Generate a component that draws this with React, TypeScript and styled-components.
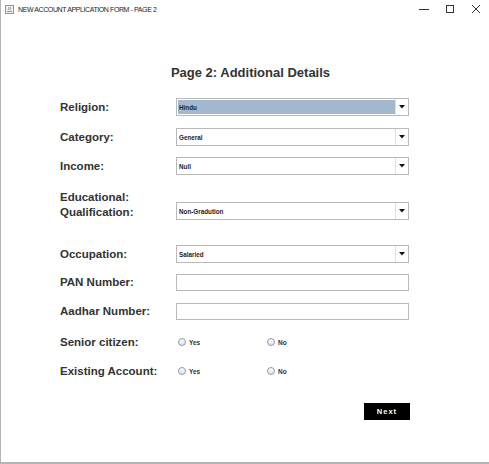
import React from "react";
import styled, { createGlobalStyle } from "styled-components";

const Global = createGlobalStyle`
  html, body { margin: 0; padding: 0; background: #ffffff; }
  body { font-family: "Liberation Sans", Arial, sans-serif; }
`;

const Frame = styled.div`
  width: 489px;
  height: 464px;
  box-sizing: border-box;
  border-left: 1px solid #b4b4b4;
  border-bottom: 2px solid #b4b4b4;
  background: #ffffff;
  display: flex;
  flex-direction: column;
  overflow: hidden;
`;

const TitleBar = styled.div`
  height: 18px;
  display: flex;
  align-items: center;
  padding-left: 4px;
  gap: 4px;
`;

const TitleText = styled.span`
  font-size: 7px;
  color: #222;
  letter-spacing: -0.4px;
  flex: 1;
`;

const Controls = styled.div`
  display: flex;
  align-items: center;
  height: 18px;
`;

const CtrlBtn = styled.div`
  width: 26px;
  height: 18px;
  display: flex;
  align-items: center;
  justify-content: center;
`;

const Content = styled.div`
  padding-left: 59px;
  width: 381px;
  display: flex;
  flex-direction: column;
`;

const Heading = styled.h1`
  margin: 47px 0 0 0;
  font-size: 13px;
  line-height: 16px;
  font-weight: bold;
  color: #333;
  text-align: center;
`;

const Row = styled.div<{ $top: number; $h?: number; $end?: boolean }>`
  display: flex;
  align-items: ${(p) => (p.$end ? "flex-end" : "center")};
  margin-top: ${(p) => p.$top}px;
  height: ${(p) => p.$h ?? 18}px;
`;

const Label = styled.div`
  width: 116px;
  font-size: 11.5px;
  line-height: 15px;
  font-weight: bold;
  color: #333;
`;

const Combo = styled.div`
  width: 233px;
  height: 18px;
  box-sizing: border-box;
  border: 1px solid #b9b9b9;
  background: #fff;
  display: flex;
`;

const ComboValue = styled.div<{ $selected?: boolean }>`
  flex: 1;
  margin: 1px 0 1px 1px;
  background: ${(p) => (p.$selected ? "#a3b8cc" : "#fff")};
  font-size: 6.3px;
  font-weight: bold;
  color: #222;
  display: flex;
  align-items: center;
  padding-left: 1px;
`;

const Arrow = styled.div`
  width: 12px;
  border-left: 1px solid #e0e0e0;
  display: flex;
  align-items: center;
  justify-content: center;
`;

const TextField = styled.div`
  width: 233px;
  height: 17px;
  box-sizing: border-box;
  border: 1px solid #b9b9b9;
  background: #fff;
`;

const RadioGroup = styled.div`
  display: flex;
`;

const RadioItem = styled.div`
  width: 89px;
  display: flex;
  align-items: center;
  gap: 3px;
  padding-left: 2px;
  box-sizing: border-box;
  font-size: 6.5px;
  font-weight: bold;
  color: #333;
`;

const RadioDot = styled.span`
  width: 6px;
  height: 6px;
  border-radius: 50%;
  border: 1px solid #8a9aaa;
  background: linear-gradient(#ffffff, #dde3ea);
  display: inline-block;
`;

const ButtonRow = styled.div`
  margin-top: 23px;
  display: flex;
  padding-left: 304px;
`;

const NextButton = styled.div`
  width: 46px;
  height: 17px;
  background: #000;
  color: #fff;
  font-size: 7.5px;
  font-weight: bold;
  letter-spacing: 1px;
  display: flex;
  align-items: center;
  justify-content: center;
`;

const DownTri = () => (
  <svg width="6" height="4" viewBox="0 0 6 4">
    <path d="M0 0 H6 L3 3.5 Z" fill="#111" />
  </svg>
);

const ComboBox = ({ value, selected }: { value: string; selected?: boolean }) => (
  <Combo>
    <ComboValue $selected={selected}>{value}</ComboValue>
    <Arrow>
      <DownTri />
    </Arrow>
  </Combo>
);

const Radios = () => (
  <RadioGroup>
    <RadioItem>
      <RadioDot />
      Yes
    </RadioItem>
    <RadioItem>
      <RadioDot />
      No
    </RadioItem>
  </RadioGroup>
);

export default function App() {
  return (
    <>
      <Global />
      <Frame>
        <TitleBar>
          <svg width="9" height="9" viewBox="0 0 9 9">
            <rect x="0.5" y="0.5" width="8" height="8" fill="#eef2f6" stroke="#8a96a3" />
            <path d="M2 6.5 H7 M3 5 Q4.5 3.5 3.8 2 M5 5 Q6 3.5 5.3 2.2" stroke="#6b7b8c" strokeWidth="0.8" fill="none" />
          </svg>
          <TitleText>NEW ACCOUNT APPLICATION FORM - PAGE 2</TitleText>
          <Controls>
            <CtrlBtn>
              <svg width="10" height="10" viewBox="0 0 10 10">
                <path d="M0 5.5 H10" stroke="#333" strokeWidth="1" />
              </svg>
            </CtrlBtn>
            <CtrlBtn>
              <svg width="10" height="10" viewBox="0 0 10 10">
                <rect x="1.5" y="1.5" width="7" height="7" fill="none" stroke="#333" strokeWidth="1" />
              </svg>
            </CtrlBtn>
            <CtrlBtn>
              <svg width="10" height="10" viewBox="0 0 10 10">
                <path d="M1 1 L9 9 M9 1 L1 9" stroke="#333" strokeWidth="1" />
              </svg>
            </CtrlBtn>
          </Controls>
        </TitleBar>
        <Content>
          <Heading>Page 2: Additional Details</Heading>
          <Row $top={17}>
            <Label>Religion:</Label>
            <ComboBox value="Hindu" selected />
          </Row>
          <Row $top={12}>
            <Label>Category:</Label>
            <ComboBox value="General" />
          </Row>
          <Row $top={11}>
            <Label>Income:</Label>
            <ComboBox value="Null" />
          </Row>
          <Row $top={27} $end>
            <Label>
              Educational:
              <br />
              Qualification:
            </Label>
            <ComboBox value="Non-Gradution" />
          </Row>
          <Row $top={25}>
            <Label>Occupation:</Label>
            <ComboBox value="Salaried" />
          </Row>
          <Row $top={11} $h={17}>
            <Label>PAN Number:</Label>
            <TextField />
          </Row>
          <Row $top={12} $h={17}>
            <Label>Aadhar Number:</Label>
            <TextField />
          </Row>
          <Row $top={13}>
            <Label>Senior citizen:</Label>
            <Radios />
          </Row>
          <Row $top={11}>
            <Label>Existing Account:</Label>
            <Radios />
          </Row>
          <ButtonRow>
            <NextButton>Next</NextButton>
          </ButtonRow>
        </Content>
      </Frame>
    </>
  );
}
